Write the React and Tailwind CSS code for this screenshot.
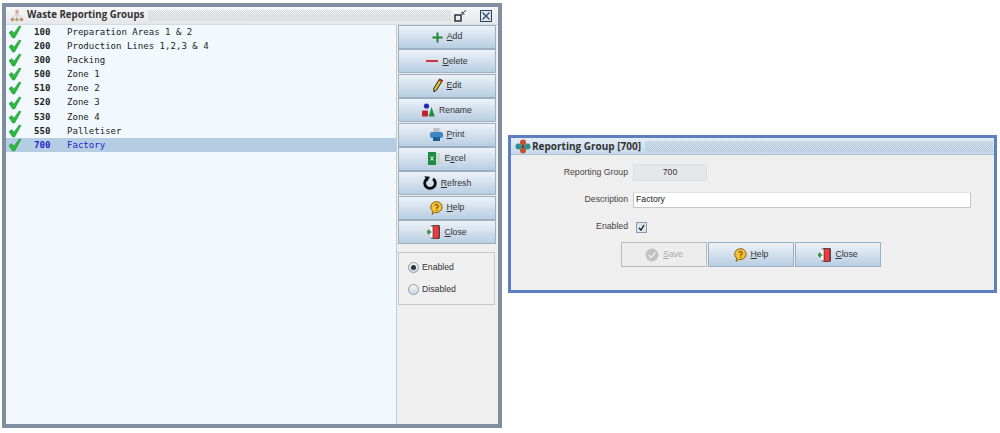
import React from "react";

const rows = [
  ["100", "Preparation Areas 1 & 2"],
  ["200", "Production Lines 1,2,3 & 4"],
  ["300", "Packing"],
  ["500", "Zone 1"],
  ["510", "Zone 2"],
  ["520", "Zone 3"],
  ["530", "Zone 4"],
  ["550", "Palletiser"],
  ["700", "Factory"],
];

const Check = () => (
  <svg width="14" height="14" viewBox="0 0 14 14">
    <path d="M1 7.5 L3.8 5.6 L6 8.2 L11.2 1 L13 1.6 L6.6 13 L4.6 13 Z" fill="#2cb83e" stroke="#1b8f30" strokeWidth="0.5" />
  </svg>
);

const AddIcon = () => (
  <svg width="11" height="11" viewBox="0 0 11 11">
    <path d="M4.5 0.5h2v4h4v2h-4v4h-2v-4h-4v-2h4z" fill="#1f8a2e" />
  </svg>
);

const DeleteIcon = () => (
  <svg width="12" height="12" viewBox="0 0 12 12">
    <rect x="0" y="5" width="12" height="2" fill="#d8303a" />
  </svg>
);

const EditIcon = () => (
  <svg width="10" height="15" viewBox="0 0 10 15">
    <path d="M6.5 1 L9.5 2.5 L3.5 12 L1 14 L0.8 10.5 Z" fill="#e8c832" stroke="#1a1a1a" strokeWidth="1" />
    <path d="M6.5 1 L9.5 2.5 L8.6 4.2 L5.6 2.6 Z" fill="#b03030" />
  </svg>
);

const RenameIcon = () => (
  <svg width="13" height="14" viewBox="0 0 13 14">
    <circle cx="4.5" cy="3" r="2.6" fill="#2626b8" />
    <rect x="0" y="7.5" width="6" height="6" rx="1" fill="#c8202a" />
    <path d="M9.5 4 L12.8 13.5 H6.8 Z" fill="#1f8f3a" />
  </svg>
);

const PrintIcon = () => (
  <svg width="13" height="13" viewBox="0 0 13 13">
    <rect x="3.5" y="0" width="6" height="4" fill="#b8bec6" />
    <rect x="0" y="4" width="13" height="6" rx="2" fill="#3f86c4" />
    <rect x="3" y="9" width="7" height="4" fill="#1f5f98" />
  </svg>
);

const ExcelIcon = () => (
  <svg width="12" height="13" viewBox="0 0 12 13">
    <rect x="5" y="1" width="7" height="11" fill="#c9d9cc" />
    <rect x="0" y="0" width="8" height="13" fill="#1d8a45" />
    <path d="M2.5 4.5 L5.5 8.5 M5.5 4.5 L2.5 8.5" stroke="#fff" strokeWidth="1" />
  </svg>
);

const RefreshIcon = () => (
  <svg width="14" height="14" viewBox="0 0 14 14">
    <path d="M4 2.8 A5.3 5.3 0 1 0 10 2.8" fill="none" stroke="#0d0d0d" strokeWidth="2.8" />
    <path d="M1.4 0.2 L7 0.8 L4.4 5.4 Z" fill="#0d0d0d" />
  </svg>
);

const HelpIcon = () => (
  <svg width="13" height="14" viewBox="0 0 13 14">
    <path d="M6.5 0.6 A5.8 5.5 0 1 1 4.8 11.4 L2.2 13.4 L2.6 10.2 A5.8 5.5 0 0 1 6.5 0.6 Z" fill="#f2c230" stroke="#7a5a10" strokeWidth="0.9" />
    <path d="M4.8 4.6 A1.8 1.6 0 1 1 6.7 6.8 V7.8" fill="none" stroke="#7a4a10" strokeWidth="1.1" />
    <rect x="6.1" y="8.6" width="1.2" height="1.2" fill="#7a4a10" />
  </svg>
);

const CloseIcon = () => (
  <svg width="13" height="14" viewBox="0 0 13 14">
    <path d="M3.5 1 H12.5 V13 H3.5" fill="#fff" stroke="#333" strokeWidth="0.8" />
    <rect x="6" y="0.5" width="6" height="13" fill="#ee3a42" stroke="#222" strokeWidth="0.6" />
    <path d="M0 7 H4.5 M2.4 4.8 L0.4 7 L2.4 9.2" fill="none" stroke="#3c8a3c" strokeWidth="1.5" />
  </svg>
);

const SaveIcon = () => (
  <svg width="14" height="14" viewBox="0 0 14 14">
    <circle cx="7" cy="7" r="6.5" fill="#c2c2c2" />
    <path d="M3.5 7 L6 9.5 L10.5 4.5" fill="none" stroke="#e8e8e8" strokeWidth="1.6" />
  </svg>
);

const AppIcon = () => (
  <svg width="14" height="13" viewBox="0 0 14 13">
    <circle cx="7" cy="2.5" r="1.8" fill="#d9a080" />
    <circle cx="2.5" cy="10.5" r="1.8" fill="#d08a70" />
    <circle cx="7" cy="10.5" r="1.8" fill="#a0b070" />
    <circle cx="11.5" cy="10.5" r="1.8" fill="#d08a70" />
    <path d="M7 4 L2.5 9 M7 4 V9 M7 4 L11.5 9" stroke="#b8a898" strokeWidth="0.6" />
  </svg>
);

const GroupIcon = () => (
  <svg width="16" height="15" viewBox="0 0 16 15">
    <circle cx="8" cy="3.5" r="3" fill="#c9502c" />
    <circle cx="8" cy="11.5" r="3" fill="#c9502c" />
    <circle cx="3.5" cy="7.5" r="3" fill="#2f8f8a" />
    <circle cx="12.5" cy="7.5" r="3" fill="#2f8f8a" />
    <circle cx="8" cy="7.5" r="1.6" fill="#3a3a3a" />
  </svg>
);

const Label = ({ text, mnemonic }) => {
  const i = mnemonic ? text.indexOf(mnemonic) : -1;
  if (i < 0) return <span>{text}</span>;
  return (
    <span>
      {text.slice(0, i)}
      <span className="underline">{mnemonic}</span>
      {text.slice(i + 1)}
    </span>
  );
};

const sideButtons = [
  { text: "Add", key: "A", icon: <AddIcon /> },
  { text: "Delete", key: "D", icon: <DeleteIcon /> },
  { text: "Edit", key: "E", icon: <EditIcon /> },
  { text: "Rename", key: "", icon: <RenameIcon /> },
  { text: "Print", key: "P", icon: <PrintIcon /> },
  { text: "Excel", key: "x", icon: <ExcelIcon /> },
  { text: "Refresh", key: "R", icon: <RefreshIcon /> },
  { text: "Help", key: "H", icon: <HelpIcon /> },
  { text: "Close", key: "C", icon: <CloseIcon /> },
];

const Radio = ({ label, checked }) => (
  <div className="flex items-center gap-[3px]">
    <span className="w-[11px] h-[11px] rounded-full border border-[#8a9bab] bg-gradient-to-b from-[#f4f7fa] to-[#c9d6e2] flex items-center justify-center">
      {checked && <span className="w-[5px] h-[5px] rounded-full bg-[#333]" />}
    </span>
    <span>{label}</span>
  </div>
);

const App = () => (
  <div className="w-[1000px] h-[433px] bg-white overflow-hidden flex items-start font-['Liberation_Sans',sans-serif] text-[8.7px] text-[#333]">
    {/* Waste Reporting Groups window */}
    <div className="ml-[2px] mt-[3px] w-[500px] h-[425px] border-4 border-[#7f8ea0] bg-[#efefef] flex flex-col shrink-0">
      <div className="h-[18px] shrink-0 flex items-center bg-gradient-to-b from-[#f6f7f7] to-[#e4e7e9] border-b border-[#d5dbe0]">
        <span className="ml-[4px] mr-[3px]"><AppIcon /></span>
        <span className="font-['Open_Sans',sans-serif] font-bold text-[9.7px] text-[#333] mr-[4px]">Waste Reporting Groups</span>
        <div className="flex-1 h-[11px] bg-[repeating-conic-gradient(#d2d5d8_0_25%,transparent_0_50%)] bg-[length:2px_2px]" />
        <svg className="ml-[3px]" width="13" height="13" viewBox="0 0 13 13">
          <rect x="1" y="6" width="6" height="6" fill="none" stroke="#223" strokeWidth="1.4" />
          <path d="M12 1 L8 5 M8 2.5 V5 H10.5" fill="none" stroke="#223" strokeWidth="0.9" />
        </svg>
        <svg className="ml-[13px] mr-[6px]" width="12" height="12" viewBox="0 0 12 12">
          <rect x="0.5" y="0.5" width="11" height="11" fill="#dfe6ee" stroke="#2a4060" />
          <path d="M2.5 2.5 L9.5 9.5 M9.5 2.5 L2.5 9.5" stroke="#2a4060" strokeWidth="1.1" />
        </svg>
      </div>
      <div className="flex flex-1 min-h-0">
        <div className="w-[391px] bg-[#f1f9fe] border-r border-[#c5ccd2]">
          {rows.map(([code, name]) => {
            const selected = code === "700";
            return (
              <div
                key={code}
                className={`h-[14.1px] flex items-center font-['DejaVu_Sans_Mono',monospace] text-[9.05px] leading-none ${
                  selected ? "bg-[#b5cde3] text-[#1f1fd0]" : "text-[#222]"
                }`}
              >
                <span className="ml-[2px] w-[26px]"><Check /></span>
                <span className="w-[33px] pt-[1px] font-bold">{code}</span>
                <span className="pt-[1px] whitespace-pre">{name}</span>
              </div>
            );
          })}
        </div>
        <div className="w-[98px] ml-[1px] flex flex-col">
          <div className="flex flex-col gap-[0.4px]">
            {sideButtons.map((b) => (
              <div
                key={b.text}
                className="h-[24px] flex items-center justify-center gap-[4px] border border-[#9db0c2] bg-gradient-to-b from-[#edf2f8] to-[#b9cee2]"
              >
                {b.icon}
                <Label text={b.text} mnemonic={b.key} />
              </div>
            ))}
          </div>
          <div className="mt-[8px] h-[53px] w-[97px] border border-[#c8c8c8] pl-[9px] flex flex-col justify-center gap-[9px]">
            <Radio label="Enabled" checked />
            <Radio label="Disabled" />
          </div>
        </div>
      </div>
    </div>

    {/* Reporting Group dialog */}
    <div className="ml-[6px] mt-[135px] w-[489px] h-[158px] border-[3px] border-[#5e7fbf] bg-[#efefef] flex flex-col shrink-0">
      <div className="h-[17px] shrink-0 flex items-center bg-gradient-to-b from-[#e4edf6] to-[#c6d9ea] border-b border-[#a9c0d6]">
        <span className="ml-[4px] mr-[1px]"><GroupIcon /></span>
        <span className="font-['Open_Sans',sans-serif] font-bold text-[10px] text-[#333] mr-[4px]">Reporting Group [700]</span>
        <div className="flex-1 h-[11px] mr-[1px] bg-[repeating-conic-gradient(#b5c9dc_0_25%,transparent_0_50%)] bg-[length:2px_2px]" />
      </div>
      <div className="flex-1 pt-[9px]">
        <div className="flex items-center h-[17px]">
          <span className="w-[117px] text-right text-[#444]">Reporting Group</span>
          <div className="ml-[5px] w-[74px] h-[17px] bg-[#e4e8ea] border border-[#dde0e2] flex items-center justify-center">700</div>
        </div>
        <div className="flex items-center h-[16px] mt-[11px]">
          <span className="w-[117px] text-right text-[#444]">Description</span>
          <div className="ml-[5px] w-[338px] h-[16px] bg-white border border-[#c4c8cc] border-t-[#e0e0e0] flex items-center pl-[2px] text-[#222]">Factory</div>
        </div>
        <div className="flex items-center h-[12px] mt-[13px]">
          <span className="w-[117px] text-right text-[#444]">Enabled</span>
          <div className="ml-[8px] w-[11px] h-[11px] border border-[#8a9bab] bg-[#dbe5ef] flex items-center justify-center">
            <svg width="7" height="7" viewBox="0 0 7 7">
              <path d="M1 4 L3 6 L6 1" fill="none" stroke="#111" strokeWidth="1.3" />
            </svg>
          </div>
        </div>
        <div className="flex mt-[9px] ml-[110px] gap-[1px]">
          <div className="w-[86px] h-[25px] border border-[#b9b9b9] bg-[#ededed] flex items-center justify-center gap-[4px] text-[#aaa]">
            <SaveIcon />
            <Label text="Save" mnemonic="S" />
          </div>
          <div className="w-[86px] h-[25px] border border-[#9db0c2] bg-gradient-to-b from-[#edf2f8] to-[#b9cee2] flex items-center justify-center gap-[4px]">
            <HelpIcon />
            <Label text="Help" mnemonic="H" />
          </div>
          <div className="w-[86px] h-[25px] border border-[#9db0c2] bg-gradient-to-b from-[#edf2f8] to-[#b9cee2] flex items-center justify-center gap-[4px]">
            <CloseIcon />
            <Label text="Close" mnemonic="C" />
          </div>
        </div>
      </div>
    </div>
  </div>
);

export default App;
